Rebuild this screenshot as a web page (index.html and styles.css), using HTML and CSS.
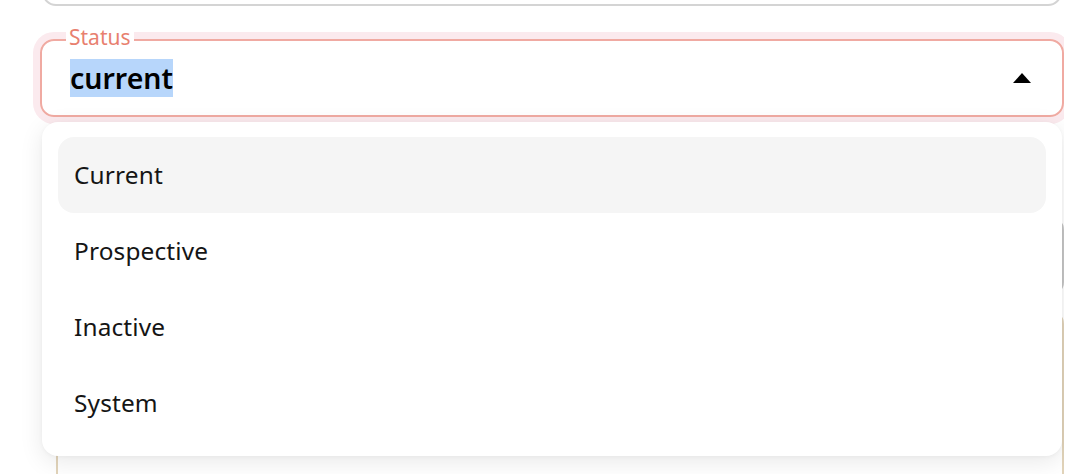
FILE: index.html
```html
<!DOCTYPE html>
<html lang="en">
<head>
<meta charset="utf-8">
<title>Status select</title>
<link rel="stylesheet" href="styles.css">
</head>
<body>
<div class="page">
  <div class="field prev-field"></div>

  <div class="field status-field">
    <span class="field-label">Status</span>
    <div class="field-value"><span class="selected-text">current</span></div>
    <svg class="field-arrow" width="18" height="10" viewBox="0 0 18 10" aria-hidden="true"><path d="M0 10 L9 0 L18 10 Z" fill="#000"/></svg>

    <ul class="menu">
      <li class="menu-item active">Current</li>
      <li class="menu-item">Prospective</li>
      <li class="menu-item">Inactive</li>
      <li class="menu-item">System</li>
    </ul>
  </div>

  <div class="bg-box gray-box"></div>
  <div class="bg-box beige-box"></div>
</div>
</body>
</html>
```

FILE: styles.css
```css
html, body {
  margin: 0;
  padding: 0;
  background: #ffffff;
  overflow: hidden;
}

body {
  width: 1090px;
  height: 474px;
  font-family: "Noto Sans", "Open Sans", sans-serif;
  color: #111;
}

.page {
  display: flex;
  flex-direction: column;
  padding-left: 40px;
  width: 1024px;
  height: 474px;
  overflow: hidden;
}

.field {
  box-sizing: border-box;
  width: 1024px;
  border-radius: 14px;
  flex-shrink: 0;
}

.prev-field {
  height: 60px;
  margin-top: -54px;
  border: 2px solid #d4d4d4;
  margin-left: 2px;
  width: 1020px;
}

.status-field {
  position: relative;
  margin-top: 33px;
  height: 78px;
  border: 2px solid #f0aaa2;
  box-shadow: 0 0 0 7px #fbeaee;
  display: flex;
  align-items: center;
  padding: 0 31px 0 28px;
}

.field-label {
  position: absolute;
  top: -17px;
  left: 24px;
  padding: 0 3px;
  background: #fff;
  font-size: 21px;
  line-height: 26px;
  color: #e8806f;
}

.field-value {
  flex: 1;
  font-size: 28.5px;
  font-weight: 600;
  line-height: 38px;
  color: #000;
}

.selected-text {
  background: #b7d6fb;
  display: inline-block;
}

.field-arrow {
  display: block;
}

.menu {
  position: absolute;
  top: 81px;
  left: 0;
  width: 1020px;
  box-sizing: border-box;
  margin: 0;
  padding: 15px 16px;
  list-style: none;
  background: #fff;
  border-radius: 16px;
  box-shadow: 0 6px 24px rgba(0, 0, 0, 0.09), 0 1px 4px rgba(0, 0, 0, 0.04);
  z-index: 5;
}

.menu-item {
  box-sizing: border-box;
  height: 76px;
  display: flex;
  align-items: center;
  padding: 0 16px 2px;
  border-radius: 16px;
  font-size: 24.4px;
  letter-spacing: 0.15px;
  color: #151515;
}

.menu-item.active {
  background: #f5f5f5;
}

.bg-box {
  box-sizing: border-box;
  border-radius: 14px;
  flex-shrink: 0;
}

.gray-box {
  margin-top: 99px;
  margin-left: 16px;
  width: 1008px;
  height: 80px;
  border: 2px solid #c6c6c6;
}

.beige-box {
  margin-top: 14px;
  margin-left: 16px;
  width: 1008px;
  height: 200px;
  border: 2px solid #e2d4ba;
}
```
